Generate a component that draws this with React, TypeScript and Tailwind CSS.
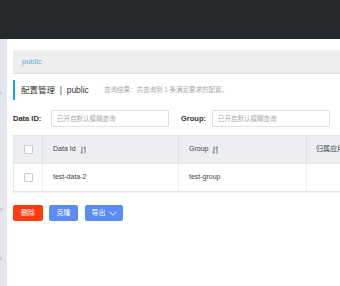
import React from "react";

const font = { fontFamily: '"Liberation Sans", Arial, "Noto Sans CJK SC", sans-serif' };

function SortIcon() {
  return (
    <svg width="7" height="8" viewBox="0 0 7 8" className="ml-[4px]" fill="none" stroke="#666" strokeWidth="0.9">
      <path d="M2 0.5 V7.3 M0.6 5.8 L2 7.3" />
      <path d="M5 7.5 V0.7 M3.6 2.2 L5 0.7" />
    </svg>
  );
}

function Checkbox() {
  return <div className="w-[9px] h-[9px] border border-[#c8ccd2] rounded-[1px] bg-white" />;
}

export default function App() {
  return (
    <div className="w-[340px] h-[286px] flex flex-col overflow-hidden bg-white text-[#333]" style={font}>
      <div className="h-[39px] bg-[#25292e] shrink-0" />
      <div className="flex flex-1 min-h-0">
        <div className="w-[7px] bg-[#e3e6eb] shrink-0 relative">
          <span className="absolute left-0 top-[53px] text-[5px] text-[#9aa] leading-none">^</span>
          <span className="absolute left-0 top-[168px] text-[5px] text-[#9aa] leading-none">v</span>
          <span className="absolute left-0 top-[217px] text-[5px] text-[#9aa] leading-none">v</span>
        </div>
        <div className="flex-1 min-w-0 pl-[6px] overflow-hidden">
          <div className="mt-[11px] h-[24px] bg-[#eeeeee] border-b border-[#dcdcdc] flex items-center pl-[9px]">
            <span className="text-[7.5px] text-[#4fb6e3]">public</span>
          </div>
          <div className="mt-[6px] h-[20px] border-l-[2px] border-[#1aa3dc] flex items-center pl-[6px] whitespace-nowrap">
            <span className="text-[8.5px] text-[#333]">配置管理&nbsp;&nbsp;|&nbsp;&nbsp;public</span>
            <span className="ml-[15px] text-[6.5px] text-[#aaa]">查询结果：共查询到 1 条满足要求的配置。</span>
          </div>
          <div className="mt-[10px] h-[17px] flex items-center whitespace-nowrap">
            <span className="w-[38px] text-[7.5px] font-bold text-[#333]">Data ID:</span>
            <div className="w-[118px] h-[17px] border border-[#dcdfe4] rounded-[1px] flex items-center pl-[5px] text-[6.5px] text-[#aaa]">
              已开启默认模糊查询
            </div>
            <span className="ml-[12px] w-[31px] text-[7.5px] font-bold text-[#333]">Group:</span>
            <div className="w-[118px] h-[17px] border border-[#dcdfe4] rounded-[1px] flex items-center pl-[5px] text-[6.5px] text-[#aaa]">
              已开启默认模糊查询
            </div>
          </div>
          <div className="mt-[8px] w-[360px] border-b border-[#e4e6ea] shadow-[0_1px_1px_rgba(0,0,0,0.05)] text-[7px] whitespace-nowrap">
            <div className="flex h-[28px] bg-[#eceef2] border-t border-[#e4e6ea]">
              <div className="w-[30px] flex items-center justify-center border-r border-[#dfe2e6] border-l border-l-[#e4e6ea]"><Checkbox /></div>
              <div className="w-[136px] flex items-center pl-[10px] border-r border-[#dfe2e6] text-[#444]">Data Id<SortIcon /></div>
              <div className="w-[128px] flex items-center pl-[10px] border-r border-[#dfe2e6] text-[#444]">Group<SortIcon /></div>
              <div className="flex-1 flex items-center pl-[9px] text-[#444]">归属应用</div>
            </div>
            <div className="flex h-[28px] bg-white border-t border-[#e4e6ea]">
              <div className="w-[30px] flex items-center justify-center border-r border-[#eceef1] border-l border-l-[#e4e6ea]"><Checkbox /></div>
              <div className="w-[136px] flex items-center pl-[10px] border-r border-[#eceef1] text-[#444]">test-data-2</div>
              <div className="w-[128px] flex items-center pl-[10px] border-r border-[#eceef1] text-[#444]">test-group</div>
              <div className="flex-1" />
            </div>
          </div>
          <div className="mt-[13px] flex gap-[6px] text-[7px] text-white">
            <button className="w-[30px] h-[16px] bg-[#ff3b0f] rounded-[2px] flex items-center justify-center">删除</button>
            <button className="w-[29px] h-[16px] bg-[#5b8cf6] rounded-[2px] flex items-center justify-center">克隆</button>
            <button className="w-[38px] h-[16px] bg-[#5b8cf6] rounded-[2px] flex items-center justify-center ml-[1px]">
              导出
              <svg width="8" height="5" viewBox="0 0 8 5" className="ml-[3px]" fill="none" stroke="white" strokeWidth="0.9">
                <path d="M0.5 0.7 L4 4.2 L7.5 0.7" />
              </svg>
            </button>
          </div>
        </div>
      </div>
    </div>
  );
}
